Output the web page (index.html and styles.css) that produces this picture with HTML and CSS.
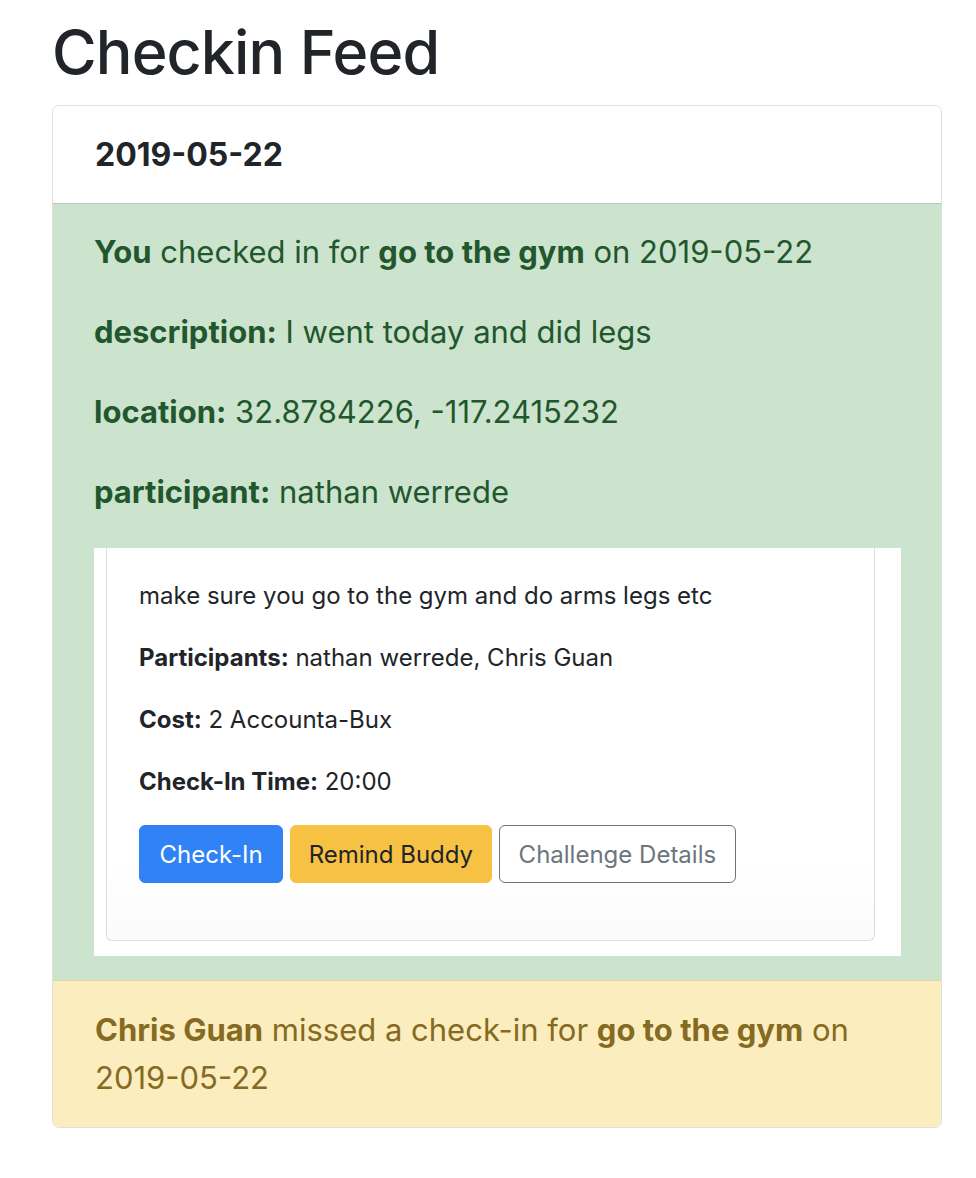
FILE: index.html
```html
<!DOCTYPE html>
<html>
<head>
<meta charset="utf-8">
<link rel="stylesheet" href="styles.css">
</head>
<body>
<div class="page">
  <h1 class="title">Checkin Feed</h1>
  <div class="feed">
    <div class="feed-header">2019-05-22</div>
    <div class="item item-success">
      <p><b>You</b> checked in for <b>go to the gym</b> on 2019-05-22</p>
      <p><b>description:</b> I went today and did legs</p>
      <p><b>location:</b> 32.8784226, -117.2415232</p>
      <p><b>participant:</b> nathan werrede</p>
      <div class="challenge-frame">
        <div class="challenge-card">
          <p>make sure you go to the gym and do arms legs etc</p>
          <p><b>Participants:</b> nathan werrede, Chris Guan</p>
          <p><b>Cost:</b> 2 Accounta-Bux</p>
          <p><b>Check-In Time:</b> 20:00</p>
          <div class="actions">
            <button class="btn btn-primary">Check-In</button>
            <button class="btn btn-warning">Remind Buddy</button>
            <button class="btn btn-outline">Challenge Details</button>
          </div>
        </div>
      </div>
    </div>
    <div class="item item-warning">
      <p><b>Chris Guan</b> missed a check-in for <b>go to the gym</b> on <span class="date">2019-05-22</span></p>
    </div>
  </div>
</div>
</body>
</html>
```

FILE: styles.css
```css
* { box-sizing: border-box; }
html, body { margin: 0; padding: 0; background: #fff; }
body {
  font-family: Inter, "Noto Sans", "Liberation Sans", sans-serif;
  color: #212529;
}
.page {
  padding: 15px 34px 40px 52px;
}
.title {
  margin: 0 0 16px 0;
  font-size: 61px;
  line-height: 74px;
  font-weight: 500;
  letter-spacing: -0.9px;
  color: #212529;
}
.feed {
  width: 890px;
  border: 1px solid #dfdfdf;
  border-radius: 7px;
  overflow: hidden;
}
.feed-header {
  height: 97px;
  padding: 0 42px;
  display: flex;
  align-items: center;
  font-size: 32px;
  font-weight: 700;
  background: #fff;
}
.item p { margin: 0; }
.item b { font-weight: 700; }
.item-success {
  background: #cce4ce;
  color: #22572d;
  border-top: 1px solid #b3cbb6;
  padding: 25px 40px 24px 41px;
  font-size: 31px;
}
.item-success > p {
  line-height: 45px;
  margin-bottom: 35px;
}
.item-success > p:nth-of-type(4) {
  margin-bottom: 34px;
}
.challenge-frame {
  background: #fff;
  height: 408px;
  padding: 0 26px 15px 12px;
  display: flex;
  flex-direction: column;
}
.challenge-card {
  flex: 1;
  border: 1px solid #dedede;
  border-top: 0;
  border-radius: 0 0 6px 6px;
  padding: 31px 32px 0 32px;
  color: #212529;
  font-size: 24px;
  background: linear-gradient(to bottom, #fff 80%, #fbfbfb 100%);
}
.challenge-card p {
  line-height: 34px;
  margin-bottom: 28px;
}
.actions {
  display: flex;
  gap: 7px;
  margin-top: -2px;
}
.btn {
  font-family: inherit;
  height: 58px;
  padding: 0 20px;
  font-size: 24px;
  border-radius: 6px;
  border: 1px solid transparent;
  cursor: pointer;
}
.btn-primary { background: #3182f6; color: #fff; border-color: #3182f6; padding: 0 19.5px; }
.btn-warning { background: #f7c244; color: #212529; border-color: #f7c244; padding: 0 17.5px; }
.btn-outline { background: #fff; color: #6c757d; border-color: #6c757d; padding: 0 19px; }
.item-warning {
  background: #fcedbf;
  color: #856a22;
  border-top: 1px solid #e3d5a5;
  padding: 25px 40px 25px 42px;
  font-size: 31px;
  line-height: 48px;
}
.date { white-space: nowrap; }
```
